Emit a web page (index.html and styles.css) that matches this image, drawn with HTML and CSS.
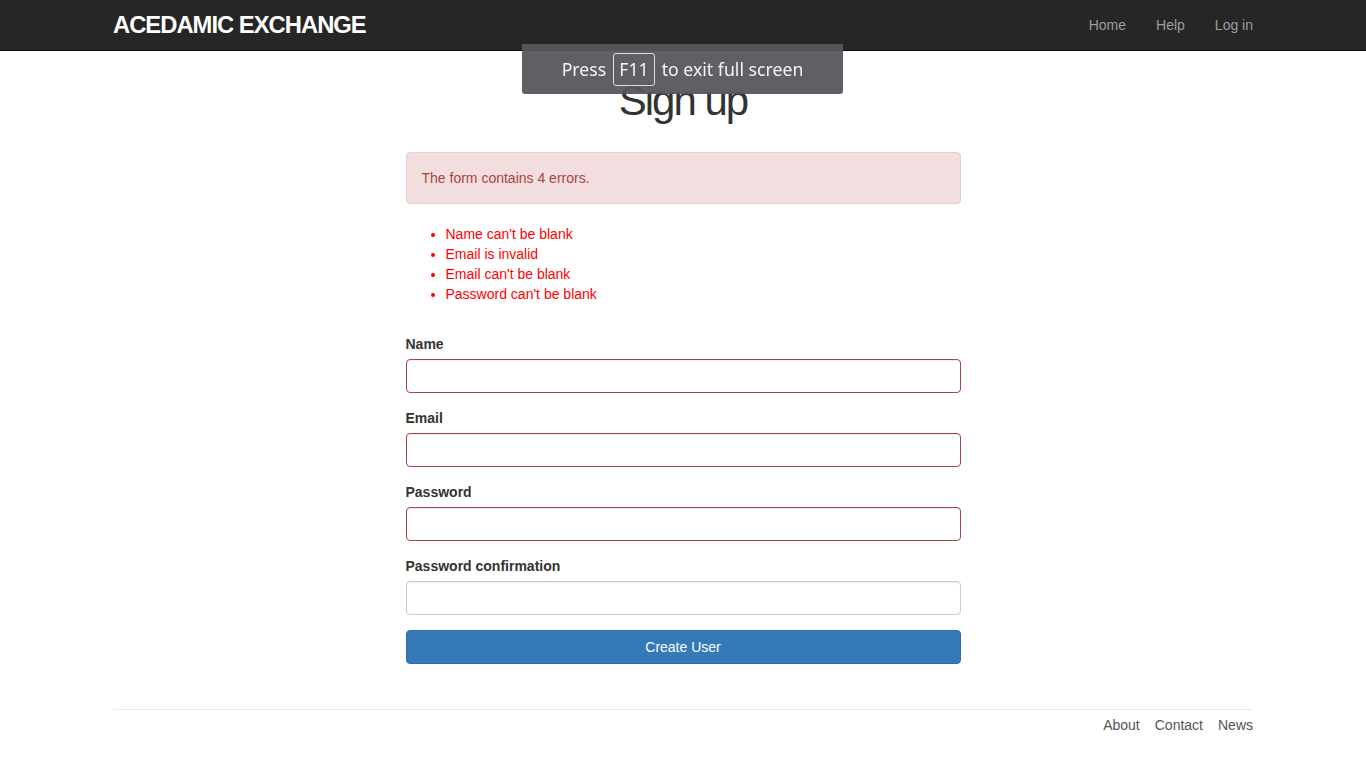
FILE: index.html
```html
<!DOCTYPE html>
<html lang="en">
<head>
<meta charset="utf-8">
<title>Sign up | Acedamic Exchange</title>
<link rel="stylesheet" href="styles.css">
</head>
<body>
<header class="navbar">
  <div class="container navbar-inner">
    <a class="logo" href="#">Acedamic Exchange</a>
    <nav>
      <ul class="nav-links">
        <li><a href="#">Home</a></li>
        <li><a href="#">Help</a></li>
        <li><a href="#">Log in</a></li>
      </ul>
    </nav>
  </div>
</header>

<div class="container">
  <h1 class="title">Sign up</h1>
  <div class="form-col">
    <form>
      <div class="error-explanation">
        <div class="alert">The form contains 4 errors.</div>
        <ul class="error-list">
          <li>Name can't be blank</li>
          <li>Email is invalid</li>
          <li>Email can't be blank</li>
          <li>Password can't be blank</li>
        </ul>
      </div>
      <label class="field-label">Name</label>
      <input class="field error" type="text">
      <label class="field-label">Email</label>
      <input class="field error" type="email">
      <label class="field-label">Password</label>
      <input class="field error" type="password">
      <label class="field-label">Password confirmation</label>
      <input class="field" type="password">
      <button class="btn-primary" type="button">Create User</button>
    </form>
  </div>

  <footer class="footer">
    <ul class="footer-links">
      <li><a href="#">About</a></li>
      <li><a href="#">Contact</a></li>
      <li><a href="#">News</a></li>
    </ul>
  </footer>
</div>

<div class="fs-notice">Press <span class="key">F11</span> to exit full screen</div>
</body>
</html>
```

FILE: styles.css
```css
* { box-sizing: border-box; }

html, body {
  margin: 0;
  background: #fff;
}

body {
  font-family: "Liberation Sans", Arial, Helvetica, sans-serif;
  font-size: 14px;
  line-height: 20px;
  color: #333;
  padding-top: 60px;
}

a { text-decoration: none; }

.container {
  width: 1170px;
  margin: 0 auto;
  padding: 0 15px;
}

.navbar {
  position: fixed;
  top: 0;
  left: 0;
  right: 0;
  height: 51px;
  background: #262626;
  border-bottom: 1px solid #0a0a0a;
  z-index: 10;
}

.navbar-inner {
  display: flex;
  justify-content: space-between;
  align-items: center;
  height: 50px;
}

.logo {
  color: #fff;
  font-size: 23.8px;
  font-weight: bold;
  letter-spacing: -1px;
  text-transform: uppercase;
  line-height: 50px;
}

.nav-links {
  display: flex;
  list-style: none;
  margin: 0 -15px 0 0;
  padding: 0;
}

.nav-links a {
  display: block;
  padding: 15px;
  color: #9d9d9d;
  line-height: 20px;
}

.title {
  font-size: 42px;
  font-weight: normal;
  letter-spacing: -2px;
  line-height: 1.1;
  text-align: center;
  color: #333;
  margin: 18px 0 28px;
}

.form-col {
  width: 555px;
  margin: 0 auto;
}

.alert {
  padding: 15px;
  background: #f2dede;
  border: 1px solid #ebccd1;
  border-radius: 4px;
  color: #a94442;
  margin-bottom: 20px;
}

.error-list {
  margin: 0 0 30px;
  padding-left: 40px;
  color: red;
}

.field-label {
  display: block;
  font-weight: bold;
  margin-bottom: 5px;
}

.field {
  display: block;
  width: 100%;
  height: 34px;
  padding: 6px 12px;
  font: inherit;
  border: 1px solid #ccc;
  border-radius: 4px;
  margin: 0 0 15px;
  box-shadow: inset 0 1px 1px rgba(0,0,0,.075);
  background: #fff;
}

.field.error {
  border-color: #a94442;
}

.btn-primary {
  display: block;
  width: 100%;
  height: 34px;
  font: inherit;
  color: #fff;
  background: #337ab7;
  border: 1px solid #2e6da4;
  border-radius: 4px;
  padding: 6px 12px;
}

.footer {
  margin-top: 45px;
  padding-top: 5px;
  border-top: 1px solid #eaeaea;
  display: flex;
  justify-content: flex-end;
}

.footer-links {
  display: flex;
  gap: 15px;
  list-style: none;
  margin: 0;
  padding: 0;
}

.footer-links a { color: #555; }

.fs-notice {
  position: fixed;
  top: 44px;
  left: 522px;
  width: 321px;
  height: 50px;
  display: flex;
  align-items: center;
  justify-content: center;
  gap: 7px;
  background: rgba(86, 87, 91, 0.95);
  border-radius: 0 0 3px 3px;
  color: #f4f4f4;
  font-family: "Noto Sans", "Open Sans", sans-serif;
  font-size: 17.7px;
  z-index: 20;
}

.key {
  display: inline-flex;
  align-items: center;
  height: 33px;
  padding: 0 5px;
  border: 1px solid #ddd;
  border-radius: 3px;
}
```
